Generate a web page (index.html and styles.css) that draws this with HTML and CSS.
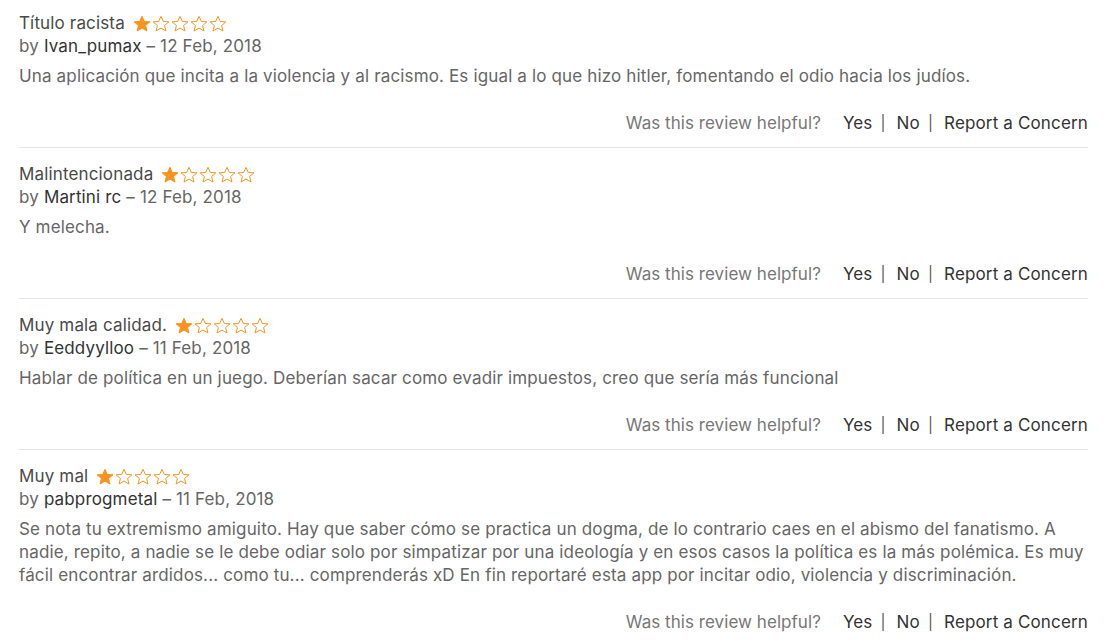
FILE: index.html
```
<!DOCTYPE html>
<html>

<head>
    <meta charset="utf-8">
    <meta name='viewport' content='width=device-width, initial-scale=1'>
    <title>Reviews</title>
    <link rel="stylesheet" href="styles.css">
</head>

<body>
    <svg width="0" height="0" class="defs">
        <symbol id="star" viewBox="0 0 20 20">
            <polygon points="10,1.5 12.6,7.2 18.8,7.6 14,11.7 15.5,17.8 10,14.5 4.5,17.8 6,11.7 1.2,7.6 7.4,7.2" />
        </symbol>
    </svg>
    <div class="reviews">
        <div class="review">
            <div class="title">Título racista <span class="stars"><svg class="full"><use href="#star"/></svg><svg><use href="#star"/></svg><svg><use href="#star"/></svg><svg><use href="#star"/></svg><svg><use href="#star"/></svg></span></div>
            <div class="by">by <span class="user">Ivan_pumax</span> – 12 Feb, 2018</div>
            <p class="text">Una aplicación que incita a la violencia y al racismo. Es igual a lo que hizo hitler, fomentando el odio hacia los judíos.</p>
            <div class="helpful"><span class="ask">Was this review helpful?</span><span class="links">Yes<span class="sep">|</span>No<span class="sep">|</span>Report a Concern</span></div>
        </div>
        <div class="review">
            <div class="title">Malintencionada <span class="stars"><svg class="full"><use href="#star"/></svg><svg><use href="#star"/></svg><svg><use href="#star"/></svg><svg><use href="#star"/></svg><svg><use href="#star"/></svg></span></div>
            <div class="by">by <span class="user">Martini rc</span> – 12 Feb, 2018</div>
            <p class="text">Y melecha.</p>
            <div class="helpful"><span class="ask">Was this review helpful?</span><span class="links">Yes<span class="sep">|</span>No<span class="sep">|</span>Report a Concern</span></div>
        </div>
        <div class="review">
            <div class="title">Muy mala calidad. <span class="stars"><svg class="full"><use href="#star"/></svg><svg><use href="#star"/></svg><svg><use href="#star"/></svg><svg><use href="#star"/></svg><svg><use href="#star"/></svg></span></div>
            <div class="by">by <span class="user">Eeddyylloo</span> – 11 Feb, 2018</div>
            <p class="text">Hablar de política en un juego. Deberían sacar como evadir impuestos, creo que sería más funcional</p>
            <div class="helpful"><span class="ask">Was this review helpful?</span><span class="links">Yes<span class="sep">|</span>No<span class="sep">|</span>Report a Concern</span></div>
        </div>
        <div class="review">
            <div class="title">Muy mal <span class="stars"><svg class="full"><use href="#star"/></svg><svg><use href="#star"/></svg><svg><use href="#star"/></svg><svg><use href="#star"/></svg><svg><use href="#star"/></svg></span></div>
            <div class="by">by <span class="user">pabprogmetal</span> – 11 Feb, 2018</div>
            <p class="text">Se nota tu extremismo amiguito. Hay que saber cómo se practica un dogma, de lo contrario caes en el abismo del fanatismo. A nadie, repito, a nadie se le debe odiar solo por simpatizar por una ideología y en esos casos la política es la más polémica. Es muy fácil encontrar ardidos... como tu... comprenderás xD En fin reportaré esta app por incitar odio, violencia y discriminación.</p>
            <div class="helpful"><span class="ask">Was this review helpful?</span><span class="links">Yes<span class="sep">|</span>No<span class="sep">|</span>Report a Concern</span></div>
        </div>
    </div>
</body>

</html>
```

FILE: styles.css
```
body {
    margin: 0;
    background: #fff;
    font-family: Inter, "Noto Sans", sans-serif;
    font-size: 17px;
    line-height: 23px;
    letter-spacing: 0.15px;
    color: #666;
}

.defs {
    position: absolute;
}

.reviews {
    padding: 0 32px 0 19px;
}

.review {
    padding: 15px 0 12px;
    border-bottom: 1px solid #e4e4e4;
}

.review:first-child {
    padding-top: 12px;
}

.title {
    color: #4a4a4a;
    display: flex;
    align-items: center;
}

.stars {
    display: inline-flex;
    margin-left: 8px;
    gap: 1px;
}

.stars svg {
    width: 18px;
    height: 18px;
    fill: none;
    stroke: #f7931e;
    stroke-width: 1.1;
}

.stars svg.full {
    fill: #f7931e;
}

.by {
    color: #666;
}

.user {
    color: #333;
}

.text {
    margin: 7px 0 0;
}

.helpful {
    display: flex;
    justify-content: flex-end;
    margin-top: 24px;
}

.ask {
    color: #777;
    margin-right: 22px;
    letter-spacing: 0.05px;
}

.links {
    color: #333;
}

.sep {
    display: inline-block;
    margin: 0 11px 0 8px;
    font-size: 15px;
    color: #555;
    transform: translateY(-1px);
}
```
